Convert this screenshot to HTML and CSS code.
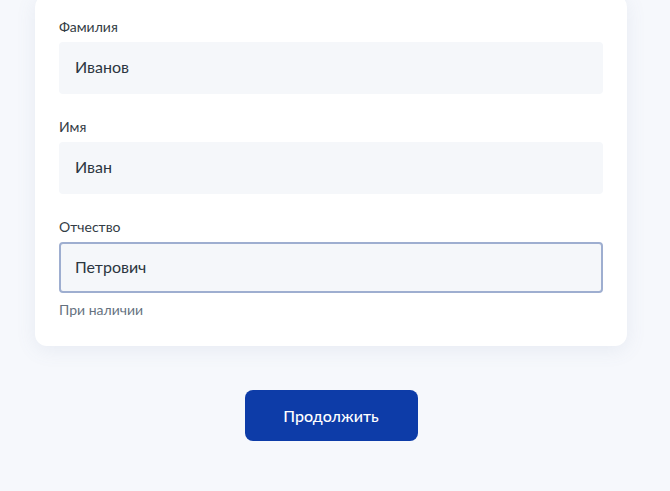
FILE: index.html
```html
<!DOCTYPE html>
<html lang="ru">
<head>
<meta charset="utf-8">
<link rel="stylesheet" href="styles.css">
</head>
<body>
<main class="page">
  <section class="card">
    <div class="field">
      <label class="label">Фамилия</label>
      <div class="input">Иванов</div>
    </div>
    <div class="field">
      <label class="label">Имя</label>
      <div class="input">Иван</div>
    </div>
    <div class="field field-last">
      <label class="label">Отчество</label>
      <div class="input input-focus">Петрович</div>
      <div class="hint">При наличии</div>
    </div>
  </section>
  <div class="actions">
    <button class="btn">Продолжить</button>
  </div>
</main>
</body>
</html>
```
FILE: styles.css
```css
* { box-sizing: border-box; }
html, body { margin: 0; padding: 0; }
body {
  background: #f6f8fc;
  font-family: Lato, "Noto Sans", sans-serif;
  color: #0b1f33;
  height: 491px;
  overflow: hidden;
}
.page {
  padding: 0 43px 0 35px;
}
.card {
  margin-top: -5px;
  width: 592px;
  background: #fff;
  border-radius: 12px;
  box-shadow: 0 4px 20px rgba(100, 120, 160, 0.10);
  padding: 24px 24px 28px 24px;
}
.field { margin-bottom: 25px; }
.field-last { margin-bottom: 0; }
.label {
  display: block;
  font-size: 14px;
  line-height: 16px;
  color: #333c45;
  margin-bottom: 7px;
}
.input {
  height: 52px;
  background: #f5f7fa;
  border-radius: 4px;
  padding: 0 16px 3px;
  display: flex;
  align-items: center;
  font-size: 16px;
  color: #2b3640;
}
.input-focus {
  border: 2px solid #9eaed0;
  padding: 0 14px 3px;
  height: 51px;
}
.hint {
  margin-top: 9px;
  font-size: 14px;
  line-height: 16px;
  color: #66727f;
}
.actions {
  display: flex;
  justify-content: center;
  padding-top: 44px;
  width: 592px;
}
.btn {
  width: 173px;
  height: 51px;
  border: none;
  border-radius: 8px;
  background: #0d3ca8;
  color: #fff;
  font-family: Lato, "Noto Sans", sans-serif;
  font-size: 16px;
  font-weight: 500;
}
```
